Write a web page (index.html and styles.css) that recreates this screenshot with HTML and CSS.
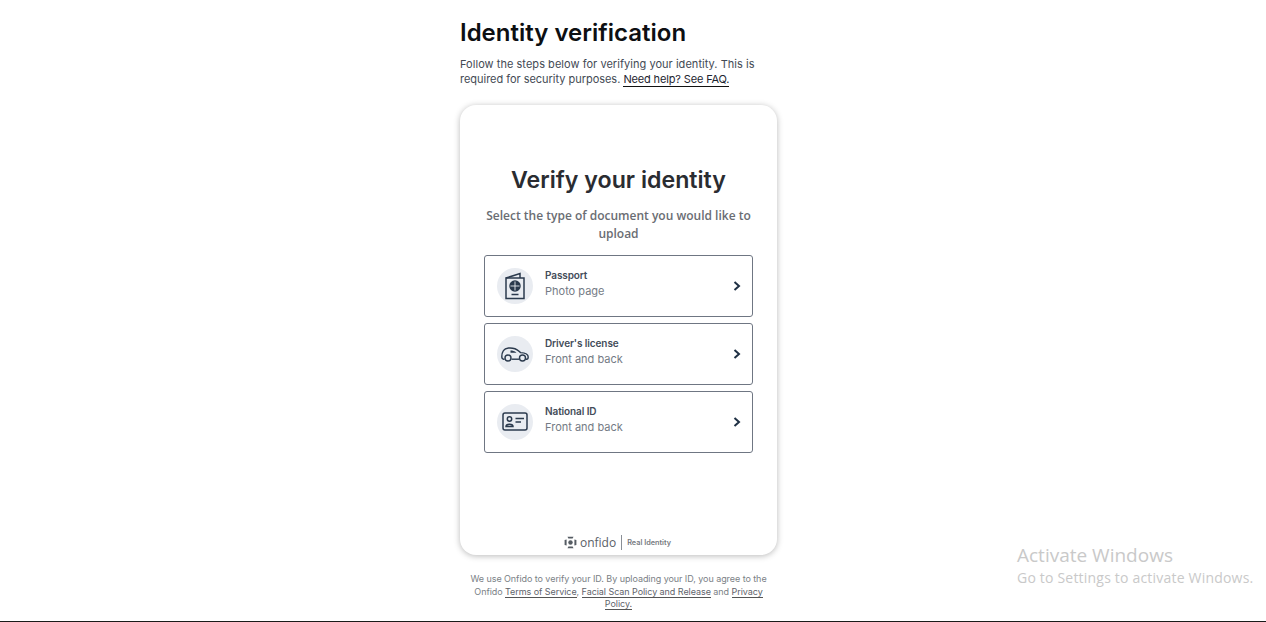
FILE: index.html
```html
<!DOCTYPE html>
<html lang="en">
<head>
  <meta charset="UTF-8">
  <title>Identity verification</title>
  <link rel="stylesheet" href="styles.css">
</head>
<body>

  <div class="page">
    <h1>Identity verification</h1>
    <p class="intro">
      Follow the steps below for verifying your identity. This is
      <span class="intro-tail">required for security purposes.</span>
      <a href="#">Need help? See FAQ.</a>
    </p>

    <div class="card">
      <h2>Verify your identity</h2>
      <p class="subtitle">Select the type of document you would like to upload</p>

      <div class="doc-list">
        <button class="doc-option">
          <span class="doc-icon">
            <svg width="22" height="28" viewBox="0 0 22 28" fill="none" stroke="#2b3a4d" stroke-width="1.5">
              <path d="M2 6 L16 1.5 V6"/>
              <path d="M2 6 H20 V26.5 H2 Z"/>
              <circle cx="11" cy="14" r="5" fill="#2b3a4d"/>
              <path d="M6.5 14 H15.5 M11 9.5 V18.5" stroke="#e9ecf1" stroke-width=".9"/>
              <path d="M7.5 22.5 H14.5"/>
            </svg>
          </span>
          <span class="doc-text">
            <span class="doc-name">Passport</span>
            <span class="doc-note">Photo page</span>
          </span>
          <svg class="chevron" width="8" height="10" viewBox="0 0 8 10" fill="none" stroke="#1f3044" stroke-width="2">
            <path d="M1.5 1 L6 5 L1.5 9"/>
          </svg>
        </button>

        <button class="doc-option">
          <span class="doc-icon">
            <svg width="28" height="15" viewBox="0 0 28 15" fill="none" stroke="#2b3a4d" stroke-width="1.4">
              <path d="M3.5 12.2 H2.6 C1.4 12.2 .8 11.2 .8 9.6 C.8 7.6 1.2 5.4 2.4 3.6 C3.4 2 5 1.2 7.5 1 C11.5 .7 15 1.4 18 4.2 L19.5 5.6 C23.5 5.8 27.2 7 27.2 10 C27.2 11.4 26.6 12.2 25.6 12.2 H25"/>
              <path d="M10.5 12.2 H18"/>
              <circle cx="7" cy="11" r="3"/>
              <circle cx="21.5" cy="11" r="3"/>
              <path d="M9.5 3.6 C11.5 3.6 13.5 4 15.5 5.8 H9.5 Z" fill="#2b3a4d" stroke="none"/>
            </svg>
          </span>
          <span class="doc-text">
            <span class="doc-name">Driver's license</span>
            <span class="doc-note">Front and back</span>
          </span>
          <svg class="chevron" width="8" height="10" viewBox="0 0 8 10" fill="none" stroke="#1f3044" stroke-width="2">
            <path d="M1.5 1 L6 5 L1.5 9"/>
          </svg>
        </button>

        <button class="doc-option">
          <span class="doc-icon">
            <svg width="26" height="20" viewBox="0 0 26 20" fill="none" stroke="#2b3a4d" stroke-width="1.5">
              <rect x="1" y="1" width="24" height="17" rx="2"/>
              <circle cx="7.5" cy="7" r="2.2"/>
              <path d="M4 14.5 C4 11.5 11 11.5 11 14.5 Z"/>
              <path d="M13.5 6.5 H22 M13.5 10 H19"/>
            </svg>
          </span>
          <span class="doc-text">
            <span class="doc-name">National ID</span>
            <span class="doc-note">Front and back</span>
          </span>
          <svg class="chevron" width="8" height="10" viewBox="0 0 8 10" fill="none" stroke="#1f3044" stroke-width="2">
            <path d="M1.5 1 L6 5 L1.5 9"/>
          </svg>
        </button>
      </div>

      <div class="brand">
        <svg width="13" height="13" viewBox="0 0 13 13" fill="#555c63">
          <circle cx="6.5" cy="6.5" r="2.2"/>
          <path d="M3.5 .8 H9.5 L8.6 2.6 H4.4 Z"/>
          <path d="M3.5 12.2 H9.5 L8.6 10.4 H4.4 Z"/>
          <path d="M.6 4 L2.6 3.4 V9.6 L.6 9 Z"/>
          <path d="M12.4 4 L10.4 3.4 V9.6 L12.4 9 Z"/>
        </svg>
        <span class="brand-name">onfido</span>
        <span class="brand-line"></span>
        <span class="brand-tag">Real Identity</span>
      </div>
    </div>

    <p class="terms">
      We use Onfido to verify your ID. By uploading your ID, you agree to the Onfido
      <a href="#">Terms of Service</a>, <a href="#">Facial Scan Policy and Release</a> and
      <a href="#">Privacy Policy.</a>
    </p>
  </div>

  <div class="activate">
    <div class="activate-title">Activate Windows</div>
    <div class="activate-note">Go to Settings to activate Windows.</div>
  </div>

</body>
</html>
```

FILE: styles.css
```css
html, body {
  height: 100%;
}

body {
  margin: 0;
  background: #fff;
  font-family: Inter, "Liberation Sans", sans-serif;
  overflow: hidden;
}

.page {
  box-sizing: border-box;
  width: 317px;
  height: 622px;
  margin-left: 460px;
  padding-top: 16px;
}

.page::after {
  content: "";
  position: absolute;
  left: 0;
  right: 0;
  bottom: 0;
  height: 1px;
  background: #1a1a1a;
}

h1 {
  margin: 0 0 8px;
  font-size: 24px;
  line-height: 33px;
  font-weight: 600;
  color: #0d0f12;
}

.intro {
  width: 310px;
  margin: 0 0 18px;
  font-size: 11px;
  line-height: 15px;
  letter-spacing: 0.04px;
  color: #434a54;
}

.intro-tail {
  letter-spacing: -0.03px;
}

.intro a {
  letter-spacing: -0.15px;
  color: #1d2530;
  text-decoration: none;
  border-bottom: 1px solid #111;
}

.card {
  box-sizing: border-box;
  height: 450px;
  padding: 60px 24px 0;
  border-radius: 16px;
  background: #fff;
  box-shadow: 0 1px 6px rgba(0, 0, 0, 0.28);
  display: flex;
  flex-direction: column;
}

h2 {
  margin: 0 0 12px;
  font-size: 23.2px;
  line-height: 30px;
  font-weight: 600;
  text-align: center;
  color: #2a2c31;
}

.subtitle {
  margin: 0 -4px 12px;
  font-family: "Open Sans", sans-serif;
  font-size: 12px;
  line-height: 18px;
  font-weight: 600;
  text-align: center;
  color: #6a6d73;
}

.doc-list {
  display: flex;
  flex-direction: column;
  gap: 6px;
}

.doc-option {
  box-sizing: border-box;
  width: 269px;
  height: 62px;
  padding: 0 11px 0 12px;
  display: flex;
  align-items: center;
  background: #fff;
  border: 1px solid #6f7683;
  border-radius: 3px;
  font-family: inherit;
  text-align: left;
}

.doc-icon {
  flex: none;
  width: 36px;
  height: 36px;
  margin-right: 12px;
  border-radius: 50%;
  background: #e9ecf1;
  display: flex;
  align-items: center;
  justify-content: center;
}

.doc-text {
  flex: 1;
  display: flex;
  flex-direction: column;
  gap: 1px;
  padding-bottom: 5px;
}

.doc-name {
  font-size: 10px;
  line-height: 14px;
  letter-spacing: -0.1px;
  font-weight: 600;
  color: #434c59;
}

.doc-note {
  font-size: 11px;
  line-height: 16px;
  color: #747b85;
}

.chevron {
  flex: none;
}

.brand {
  margin-top: auto;
  height: 26px;
  padding-right: 2px;
  display: flex;
  align-items: center;
  justify-content: center;
  gap: 3px;
}

.brand-name {
  font-family: "Open Sans", sans-serif;
  font-size: 12px;
  color: #5a6067;
}

.brand-line {
  width: 1px;
  height: 15px;
  margin: 0 2px;
  background: #8a8f96;
}

.brand-tag {
  font-size: 7.3px;
  font-weight: 600;
  color: #777b81;
}

.terms {
  margin: 18px 0 0;
  font-size: 9px;
  line-height: 12.5px;
  letter-spacing: -0.06px;
  text-align: center;
  color: #7b7f86;
}

.terms a {
  color: #5f646c;
  text-decoration: none;
  border-bottom: 1px solid #555;
}

.activate {
  position: absolute;
  left: 1017px;
  top: 543px;
  font-family: "Open Sans", sans-serif;
  color: #c9c9c9;
}

.activate-title {
  font-size: 19px;
  line-height: 25px;
}

.activate-note {
  font-size: 14px;
  line-height: 20px;
  letter-spacing: 0.2px;
}
```
